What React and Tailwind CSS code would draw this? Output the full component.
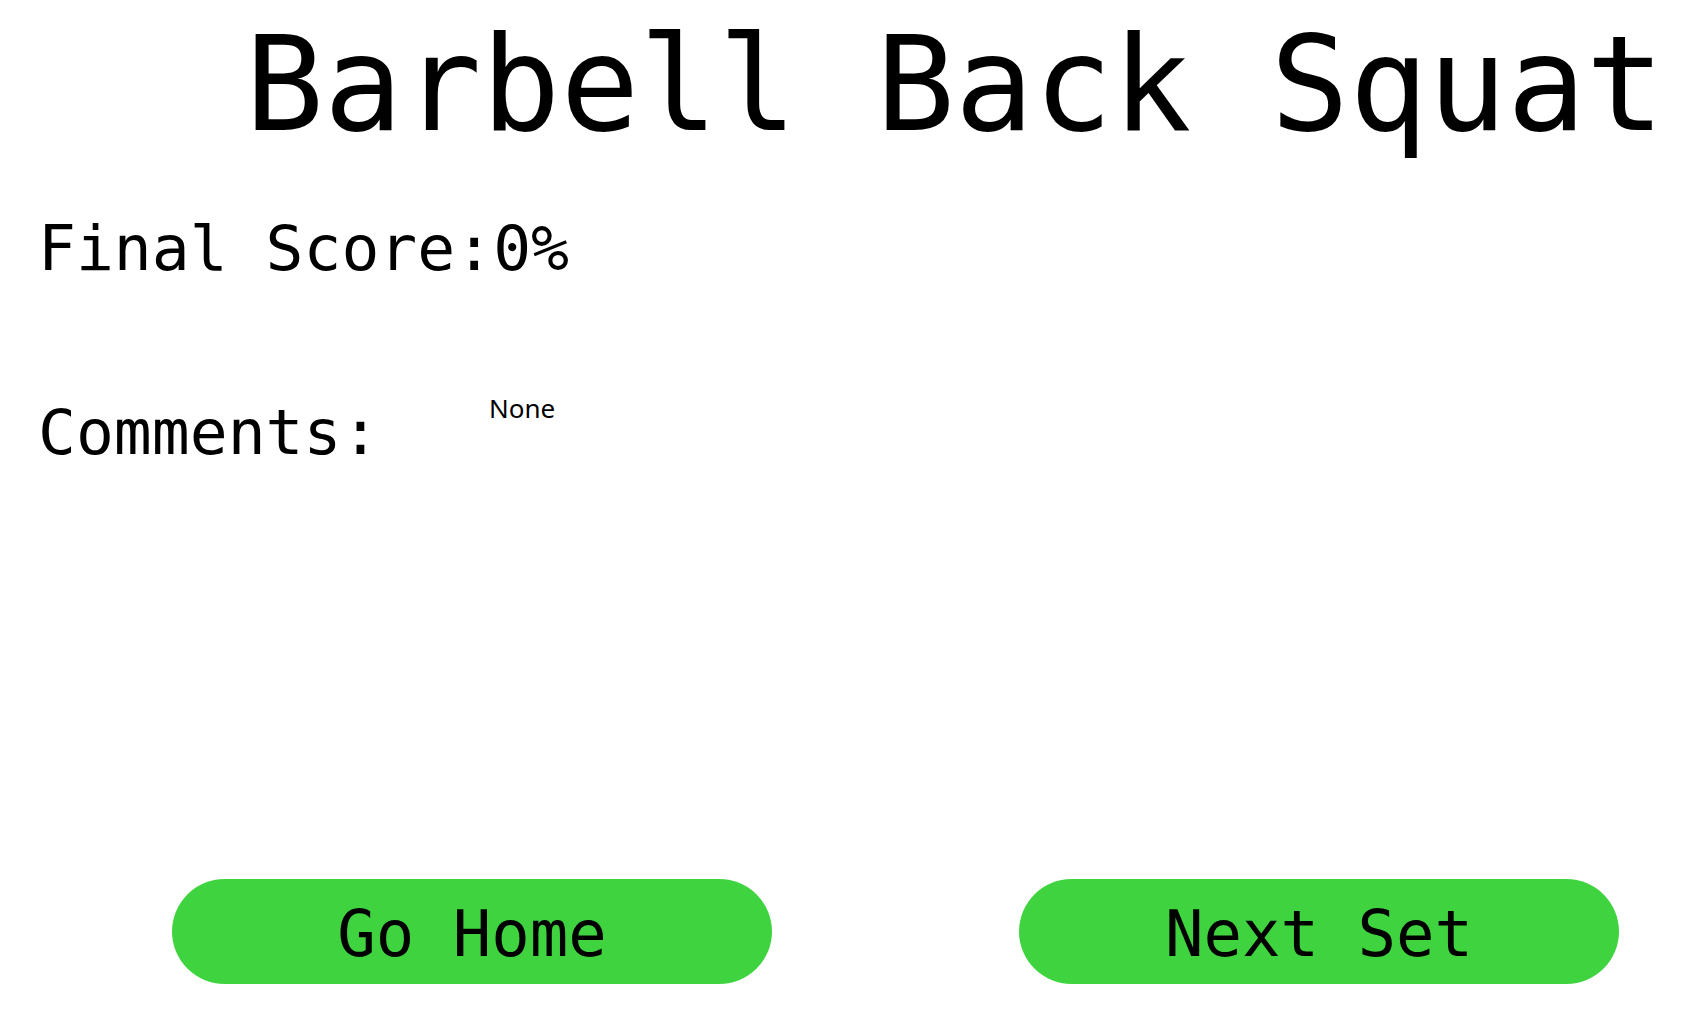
const mono = "font-['DejaVu_Sans_Mono',monospace]";

function PillButton({ children }) {
  return (
    <button
      className={`${mono} w-[600px] h-[105px] rounded-full bg-[#3fd43f] text-black text-[64px] leading-none flex items-center justify-center pt-[5px]`}
    >
      {children}
    </button>
  );
}

export default function App() {
  return (
    <div className="w-[1706px] h-[1015px] bg-white text-black flex flex-col">
      <h1 className={`${mono} text-[131px] leading-none font-normal pt-[19px] pl-[245px] whitespace-nowrap`}>
        Barbell Back Squat
      </h1>

      <div className={`${mono} text-[63px] leading-none mt-[67px] pl-[38px]`}>
        Final Score:0%
      </div>

      <div className="flex items-start mt-[115px] pl-[38px]">
        <div className={`${mono} text-[63px] leading-none w-[451px] mt-[6px]`}>Comments:</div>
        <div className="font-['Noto_Sans',sans-serif] text-[26px] leading-none">None</div>
      </div>

      <div className="flex-1" />

      <div className="flex pl-[172px] gap-[247px] pb-[31px]">
        <PillButton>Go Home</PillButton>
        <PillButton>Next Set</PillButton>
      </div>
    </div>
  );
}
